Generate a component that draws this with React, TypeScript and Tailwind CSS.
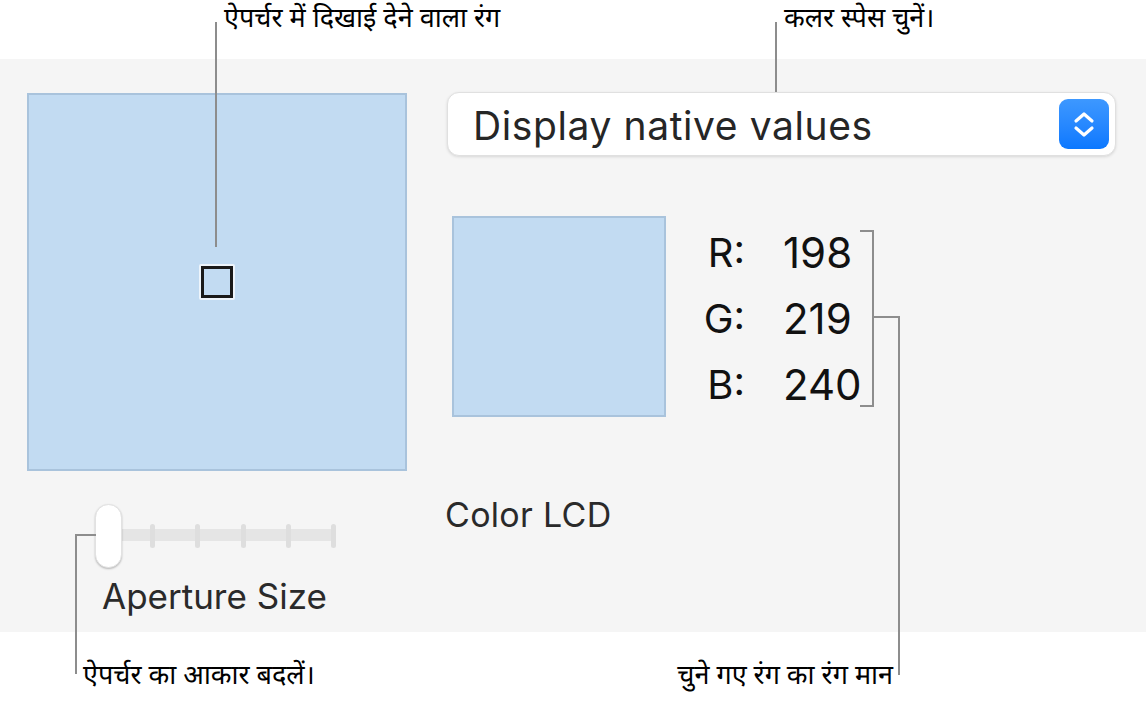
import React from 'react';

const hindi = 'font-["Noto_Sans_Devanagari","Noto_Sans","Lohit_Devanagari",sans-serif]';
const ui = 'font-["Inter","Liberation_Sans",sans-serif]';

// leader lines drawn over the panel
const Line = ({ className }: { className: string }) => (
  <div className={`absolute bg-[#8d8d8d] ${className}`} />
);

const Stepper = () => (
  <div className="w-[50px] h-[50px] rounded-[9px] bg-gradient-to-b from-[#3d98ff] to-[#0a78ff] flex items-center justify-center">
    <svg width="24" height="32" viewBox="0 0 24 32" fill="none">
      <path d="M4 13 L12 6 L20 13" stroke="white" strokeWidth="3.2" strokeLinecap="round" strokeLinejoin="round" />
      <path d="M4 20 L12 27 L20 20" stroke="white" strokeWidth="3.2" strokeLinecap="round" strokeLinejoin="round" />
    </svg>
  </div>
);

const ApertureSlider = () => (
  <div className="relative h-[64px] w-[245px] ml-[68px] flex items-center">
    <div className="absolute left-[10px] right-[4px] top-[25px] h-[12px] rounded-full bg-[#e5e5e5]" />
    <div className="relative w-[27px] h-[64px] rounded-full bg-white shadow-[0_1px_2px_rgba(0,0,0,0.25)] border border-[#e2e2e2]" />
    <div className="relative flex-1 flex justify-between ml-[28px] mr-[4px]">
      {[0, 1, 2, 3, 4].map((i) => (
        <div key={i} className="h-[24px] w-[5px] rounded-full bg-[#dedede]" />
      ))}
    </div>
  </div>
);

const channels = [
  ['R:', '198'],
  ['G:', '219'],
  ['B:', '240'],
];

export default function App() {
  return (
    <div className={`relative w-[1146px] h-[705px] bg-white overflow-hidden ${ui}`}>
      {/* top annotations */}
      <div className={`h-[59px] grid grid-cols-[784px_1fr] pt-[5px] text-[27px] leading-[32px] text-black ${hindi}`}>
        <span className="pl-[224px]">ऐपर्चर में दिखाई देने वाला रंग</span>
        <span>कलर स्पेस चुनें।</span>
      </div>

      {/* panel */}
      <div className="h-[573px] bg-[#f5f5f5] flex pl-[27px] pt-[34px]">
        <div className="flex flex-col w-[380px]">
          <div className="w-[380px] h-[378px] bg-[#c2dbf2] border-2 border-[#a9c3dc] flex items-center justify-center">
            <div className="w-[36px] h-[36px] bg-white/70 p-[2px] rounded-[2px]">
              <div className="w-full h-full border-[3px] border-[#1a1a1a] bg-[#c2dbf2]" />
            </div>
          </div>
          <div className="mt-[33px]">
            <ApertureSlider />
          </div>
          <div className="mt-[8px] ml-[75px] text-[35px] leading-[40px] text-[#2a2a2a]">Aperture Size</div>
        </div>

        <div className="flex flex-col ml-[40px] w-[669px] -mt-[1px]">
          <div className="h-[64px] rounded-[12px] bg-white border border-[#e0e0e0] shadow-[0_1px_3px_rgba(0,0,0,0.12)] flex items-center justify-between pl-[25px] pr-[6px]">
            <span className="text-[39px] leading-[44px] text-[#262626] tracking-[0.6px] mt-[3px]">Display native values</span>
            <Stepper />
          </div>
          <div className="flex items-start mt-[60px] ml-[5px]">
            <div className="w-[214px] h-[201px] bg-[#c2dbf2] border-2 border-[#a9c3dc]" />
            <div className="ml-[24px] mt-[4px] grid grid-cols-[55px_auto] gap-x-[38px] text-[42px] leading-[66px] text-[#111]">
              {channels.map(([label, value]) => (
                <React.Fragment key={label}>
                  <span className="text-right text-[40px]">{label}</span>
                  <span>{value}</span>
                </React.Fragment>
              ))}
            </div>
          </div>
          <div className="mt-[77px] -ml-[2px] text-[34px] leading-[40px] text-[#2a2a2a] tracking-[0.3px]">Color LCD</div>
        </div>
      </div>

      {/* bottom annotations */}
      <div className={`h-[73px] flex justify-between pl-[83px] pr-[253px] pt-[30px] text-[27px] leading-[32px] text-black ${hindi}`}>
        <span>ऐपर्चर का आकार बदलें।</span>
        <span>चुने गए रंग का रंग मान</span>
      </div>

      {/* leader lines */}
      <Line className="left-[215px] top-[22px] w-[2px] h-[225px]" />
      <Line className="left-[775px] top-[22px] w-[2px] h-[70px]" />
      <Line className="left-[860px] top-[230px] w-[14px] h-[2px]" />
      <Line className="left-[872px] top-[230px] w-[2px] h-[177px]" />
      <Line className="left-[860px] top-[405px] w-[14px] h-[2px]" />
      <Line className="left-[872px] top-[316px] w-[28px] h-[2px]" />
      <Line className="left-[898px] top-[316px] w-[2px] h-[359px]" />
      <Line className="left-[75px] top-[534px] w-[21px] h-[2px]" />
      <Line className="left-[75px] top-[534px] w-[2px] h-[140px]" />
    </div>
  );
}
